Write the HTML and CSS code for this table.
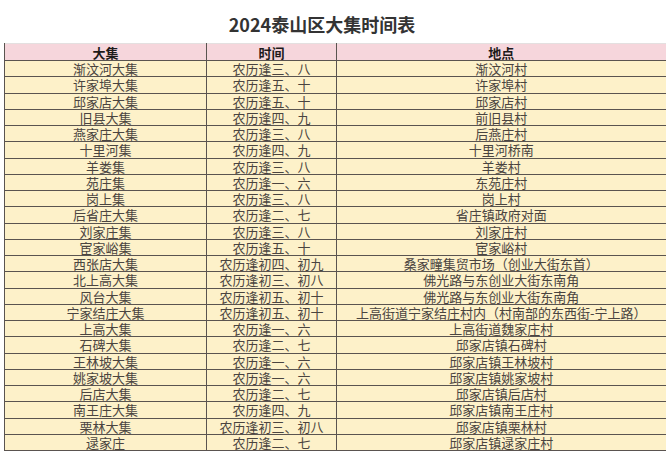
FILE: index.html
```html
<!DOCTYPE html>
<html lang="zh">
<head>
<meta charset="utf-8">
<title>2024泰山区大集时间表</title>
<link rel="stylesheet" href="styles.css">
</head>
<body>
<h1 class="title">2024泰山区大集时间表</h1>
<table class="market">
<colgroup><col class="c1"><col class="c2"><col class="c3"></colgroup>
<thead>
<tr><th>大集</th><th>时间</th><th>地点</th></tr>
</thead>
<tbody>
<tr><td>渐汶河大集</td><td>农历逢三、八</td><td>渐汶河村</td></tr>
<tr><td>许家埠大集</td><td>农历逢五、十</td><td>许家埠村</td></tr>
<tr><td>邱家店大集</td><td>农历逢五、十</td><td>邱家店村</td></tr>
<tr><td>旧县大集</td><td>农历逢四、九</td><td>前旧县村</td></tr>
<tr><td>燕家庄大集</td><td>农历逢三、八</td><td>后燕庄村</td></tr>
<tr><td>十里河集</td><td>农历逢四、九</td><td>十里河桥南</td></tr>
<tr><td>羊娄集</td><td>农历逢三、八</td><td>羊娄村</td></tr>
<tr><td>苑庄集</td><td>农历逢一、六</td><td>东苑庄村</td></tr>
<tr><td>岗上集</td><td>农历逢三、八</td><td>岗上村</td></tr>
<tr><td>后省庄大集</td><td>农历逢二、七</td><td>省庄镇政府对面</td></tr>
<tr><td>刘家庄集</td><td>农历逢三、八</td><td>刘家庄村</td></tr>
<tr><td>宦家峪集</td><td>农历逢五、十</td><td>宦家峪村</td></tr>
<tr><td>西张店大集</td><td>农历逢初四、初九</td><td>桑家疃集贸市场（创业大街东首）</td></tr>
<tr><td>北上高大集</td><td>农历逢初三、初八</td><td>佛光路与东创业大街东南角</td></tr>
<tr><td>风台大集</td><td>农历逢初五、初十</td><td>佛光路与东创业大街东南角</td></tr>
<tr><td>宁家结庄大集</td><td>农历逢初五、初十</td><td>上高街道宁家结庄村内（村南部的东西街-宁上路）</td></tr>
<tr><td>上高大集</td><td>农历逢一、六</td><td>上高街道魏家庄村</td></tr>
<tr><td>石碑大集</td><td>农历逢二、七</td><td>邱家店镇石碑村</td></tr>
<tr><td>王林坡大集</td><td>农历逢一、六</td><td>邱家店镇王林坡村</td></tr>
<tr><td>姚家坡大集</td><td>农历逢一、六</td><td>邱家店镇姚家坡村</td></tr>
<tr><td>后店大集</td><td>农历逢二、七</td><td>邱家店镇后店村</td></tr>
<tr><td>南王庄大集</td><td>农历逢四、九</td><td>邱家店镇南王庄村</td></tr>
<tr><td>栗林大集</td><td>农历逢初三、初八</td><td>邱家店镇栗林村</td></tr>
<tr><td>逯家庄</td><td>农历逢二、七</td><td>邱家店镇逯家庄村</td></tr>
</tbody>
</table>
</body>
</html>
```

FILE: styles.css
```css
html, body {
  margin: 0;
  padding: 0;
  background: #ffffff;
}
body {
  width: 670px;
  height: 454px;
  overflow: hidden;
}
.title {
  margin: 0;
  height: 43px;
  padding: 13px 26px 0 0;
  box-sizing: border-box;
  text-align: center;
  font-family: "Noto Sans CJK SC", "Noto Sans", sans-serif;
  font-weight: 700;
  font-size: 18px;
  line-height: 22px;
  color: #333333;
}
.market {
  margin-left: 4px;
  width: 661px;
  border-collapse: collapse;
  table-layout: fixed;
  font-family: "Noto Sans CJK SC", sans-serif;
  font-size: 13px;
  border-top: 1px solid #e4e0e0;
}
.c1 { width: 202px; }
.c2 { width: 130px; }
.c3 { width: 329px; }
.market thead tr {
  height: 17px;
}
.market tbody tr {
  height: 16.25px;
}
.market th,
.market td {
  padding: 0;
  line-height: 15px;
  text-align: center;
  white-space: nowrap;
  overflow: hidden;
  border-bottom: 1px solid #5a5450;
  border-left: 1px solid #5a5450;
}
.market th {
  background: #f6d6dc;
  color: #1e1a1a;
  font-weight: 700;
}
.market td {
  background: #fdf1c9;
  color: #4a4440;
  font-weight: 400;
}
```
